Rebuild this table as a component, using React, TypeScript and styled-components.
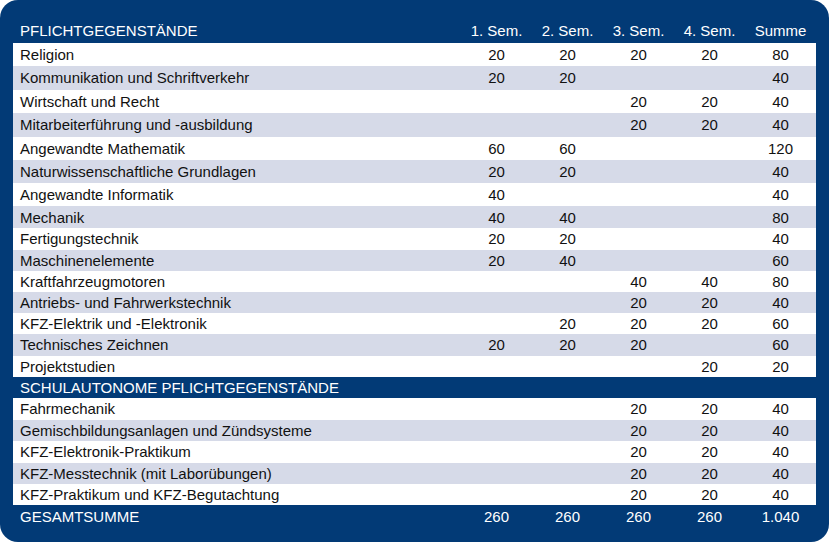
import React from "react"
import styled, { createGlobalStyle } from "styled-components"

const GlobalStyle = createGlobalStyle`
  html, body {
    margin: 0;
    padding: 0;
    background: #ffffff;
  }
`

const Frame = styled.div`
  width: 829px;
  height: 542px;
  box-sizing: border-box;
  padding: 17px 13px 14px 13px;
  background-color: #023a76;
  border-radius: 18px;
  font-family: "Liberation Sans", Arial, sans-serif;
  font-size: 15px;
  display: flex;
  flex-direction: column;
`

const Row = styled.div<{ $h: number; $shade?: boolean; $dark?: boolean }>`
  display: grid;
  grid-template-columns: 448px repeat(5, 71px);
  align-items: center;
  height: ${(p) => p.$h}px;
  background-color: ${(p) =>
    p.$dark ? "transparent" : p.$shade ? "#d6dae8" : "#ffffff"};
  color: ${(p) => (p.$dark ? "#ffffff" : "#111111")};
`

const Label = styled.div`
  padding-left: 7px;
  white-space: nowrap;
`

const Cell = styled.div`
  text-align: center;
`

type Line = [string, string, string, string, string, string, number]

const pflicht: Line[] = [
  ["Religion", "20", "20", "20", "20", "80", 23],
  ["Kommunikation und Schriftverkehr", "20", "20", "", "", "40", 23.5],
  ["Wirtschaft und Recht", "", "", "20", "20", "40", 23.5],
  ["Mitarbeiterführung und -ausbildung", "", "", "20", "20", "40", 23.5],
  ["Angewandte Mathematik", "60", "60", "", "", "120", 23.5],
  ["Naturwissenschaftliche Grundlagen", "20", "20", "", "", "40", 23],
  ["Angewandte Informatik", "40", "", "", "", "40", 23],
  ["Mechanik", "40", "40", "", "", "80", 22],
  ["Fertigungstechnik", "20", "20", "", "", "40", 21.5],
  ["Maschinenelemente", "20", "40", "", "", "60", 21.5],
  ["Kraftfahrzeugmotoren", "", "", "40", "40", "80", 21],
  ["Antriebs- und Fahrwerkstechnik", "", "", "20", "20", "40", 21],
  ["KFZ-Elektrik und -Elektronik", "", "20", "20", "20", "60", 21],
  ["Technisches Zeichnen", "20", "20", "20", "", "60", 21.5],
  ["Projektstudien", "", "", "", "20", "20", 21.5],
]

const autonom: Line[] = [
  ["Fahrmechanik", "", "", "20", "20", "40", 21.5],
  ["Gemischbildungsanlagen und Zündsysteme", "", "", "20", "20", "40", 21.5],
  ["KFZ-Elektronik-Praktikum", "", "", "20", "20", "40", 21.5],
  ["KFZ-Messtechnik (mit Laborübungen)", "", "", "20", "20", "40", 21.5],
  ["KFZ-Praktikum und KFZ-Begutachtung", "", "", "20", "20", "40", 21],
]

const Lines = ({ items }: { items: Line[] }) => (
  <>
    {items.map(([label, a, b, c, d, sum, h], i) => (
      <Row key={label} $h={h} $shade={i % 2 === 1}>
        <Label>{label}</Label>
        <Cell>{a}</Cell>
        <Cell>{b}</Cell>
        <Cell>{c}</Cell>
        <Cell>{d}</Cell>
        <Cell>{sum}</Cell>
      </Row>
    ))}
  </>
)

export default function App() {
  return (
    <>
      <GlobalStyle />
      <Frame>
        <Row $h={26} $dark>
          <Label>PFLICHTGEGENSTÄNDE</Label>
          <Cell>1. Sem.</Cell>
          <Cell>2. Sem.</Cell>
          <Cell>3. Sem.</Cell>
          <Cell>4. Sem.</Cell>
          <Cell>Summe</Cell>
        </Row>
        <Lines items={pflicht} />
        <Row $h={21} $dark>
          <Label>SCHULAUTONOME PFLICHTGEGENSTÄNDE</Label>
        </Row>
        <Lines items={autonom} />
        <Row $h={23} $dark>
          <Label>GESAMTSUMME</Label>
          <Cell>260</Cell>
          <Cell>260</Cell>
          <Cell>260</Cell>
          <Cell>260</Cell>
          <Cell>1.040</Cell>
        </Row>
      </Frame>
    </>
  )
}
